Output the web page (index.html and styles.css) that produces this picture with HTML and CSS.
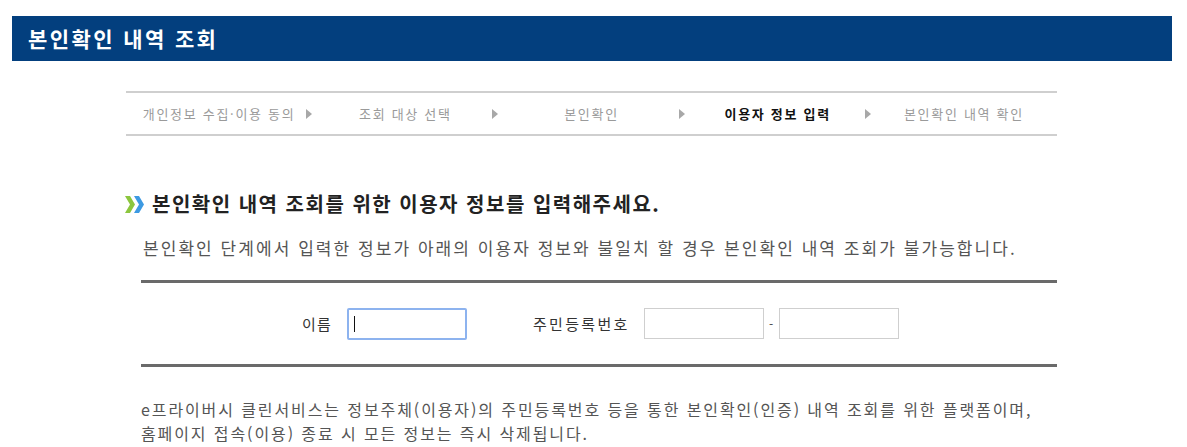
FILE: index.html
```html
<!DOCTYPE html>
<html lang="ko">
<head>
<meta charset="utf-8">
<title>본인확인 내역 조회</title>
<link rel="stylesheet" href="styles.css">
</head>
<body>
<header class="page-title">
  <h1>본인확인 내역 조회</h1>
</header>
<main class="content">
  <ol class="steps">
    <li class="step">개인정보 수집·이용 동의<span class="step-arrow"></span></li>
    <li class="step">조회 대상 선택<span class="step-arrow"></span></li>
    <li class="step">본인확인<span class="step-arrow"></span></li>
    <li class="step active">이용자 정보 입력<span class="step-arrow"></span></li>
    <li class="step">본인확인 내역 확인</li>
  </ol>

  <h2 class="section-title">
    <svg class="chevrons" width="20" height="17" viewBox="0 0 20 17" aria-hidden="true">
      <polygon points="0,0 5,0 10,8.5 5,17 0,17 5,8.5" fill="#8cc63e"/>
      <polygon points="9,0 14,0 19,8.5 14,17 9,17 14,8.5" fill="#3d9ae2"/>
    </svg>
    <span>본인확인 내역 조회를 위한 이용자 정보를 입력해주세요.</span>
  </h2>
  <p class="desc">본인확인 단계에서 입력한 정보가 아래의 이용자 정보와 불일치 할 경우 본인확인 내역 조회가 불가능합니다.</p>

  <form class="info-form">
    <label class="field-label" for="name">이름</label>
    <span class="field-wrap">
      <input class="field focused" id="name" type="text">
      <span class="caret"></span>
    </span>
    <label class="field-label rrn-label" for="rrn1">주민등록번호</label>
    <input class="field" id="rrn1" type="text">
    <span class="dash">-</span>
    <input class="field" id="rrn2" type="password">
  </form>

  <p class="note">e프라이버시 클린서비스는 정보주체(이용자)의 주민등록번호 등을 통한 본인확인(인증) 내역 조회를 위한 플랫폼이며,<br>홈페이지 접속(이용) 종료 시 모든 정보는 즉시 삭제됩니다.</p>
</main>
</body>
</html>
```

FILE: styles.css
```css
* { box-sizing: border-box; }
html, body { background: #fff; }
body {
  margin: 0;
  font-family: "Noto Sans CJK KR", "Noto Sans", sans-serif;
  color: #333;
}
.page-title {
  margin: 16px 15px 0 12px;
  height: 45px;
  background: #033f7e;
  display: flex;
  align-items: center;
  padding-left: 16px;
}
.page-title h1 {
  margin: 0;
  color: #fff;
  font-size: 21px;
  font-weight: 700;
  letter-spacing: 2.4px;
  line-height: 1;
}
.content {
  margin-left: 126px;
  width: 931px;
}
.steps {
  list-style: none;
  margin: 30px 0 0;
  padding: 0;
  display: flex;
  height: 45px;
  border-top: 2px solid #cfcfcf;
  border-bottom: 2px solid #cfcfcf;
}
.step {
  position: relative;
  flex: 1 1 0;
  display: flex;
  align-items: center;
  justify-content: center;
  font-size: 13px;
  letter-spacing: 1.7px;
  color: #9a9a9a;
}
.step.active { color: #111; font-weight: 700; }
.step-arrow {
  position: absolute;
  right: 0;
  top: 50%;
  margin-top: -5px;
  width: 0;
  height: 0;
  border-top: 5px solid transparent;
  border-bottom: 5px solid transparent;
  border-left: 6px solid #a8a8a8;
}
.section-title {
  margin: 56px 0 0;
  display: flex;
  align-items: center;
  gap: 7px;
  font-size: 20px;
  font-weight: 700;
  color: #222;
  letter-spacing: 1.5px;
  line-height: 24px;
}
.chevrons { flex: none; margin-left: -1px; }
.desc {
  margin: 20px 0 0 17px;
  font-size: 17px;
  color: #555;
  letter-spacing: 2.05px;
  line-height: 24px;
}
.info-form {
  margin: 20px 0 0 15px;
  height: 87px;
  border-top: 3px solid #6a6a6a;
  border-bottom: 3px solid #6a6a6a;
  display: flex;
  align-items: center;
  padding-left: 161px;
}
.field-label {
  font-size: 15px;
  color: #333;
  letter-spacing: 1.2px;
  margin-right: 15px;
}
.rrn-label { margin-left: 66px; letter-spacing: 2.3px; margin-right: 14px; }
.field-wrap {
  position: relative;
  display: flex;
}
.field {
  width: 120px;
  height: 31px;
  border: 1px solid #cfcfcf;
  border-radius: 0;
  padding: 0 8px;
  font: inherit;
  font-size: 15px;
  outline: none;
  background: #fff;
}
.field.focused {
  border: 2px solid #8db3ef;
  border-radius: 2px;
  height: 32px;
}
.caret {
  position: absolute;
  left: 7px;
  top: 8px;
  width: 1px;
  height: 16px;
  background: #111;
}
.dash {
  width: 15px;
  text-align: center;
  font-size: 12px;
  color: #444;
}
.note {
  margin: 30px 0 0 15px;
  font-size: 16px;
  color: #555;
  letter-spacing: 1.9px;
  line-height: 24px;
}
```
